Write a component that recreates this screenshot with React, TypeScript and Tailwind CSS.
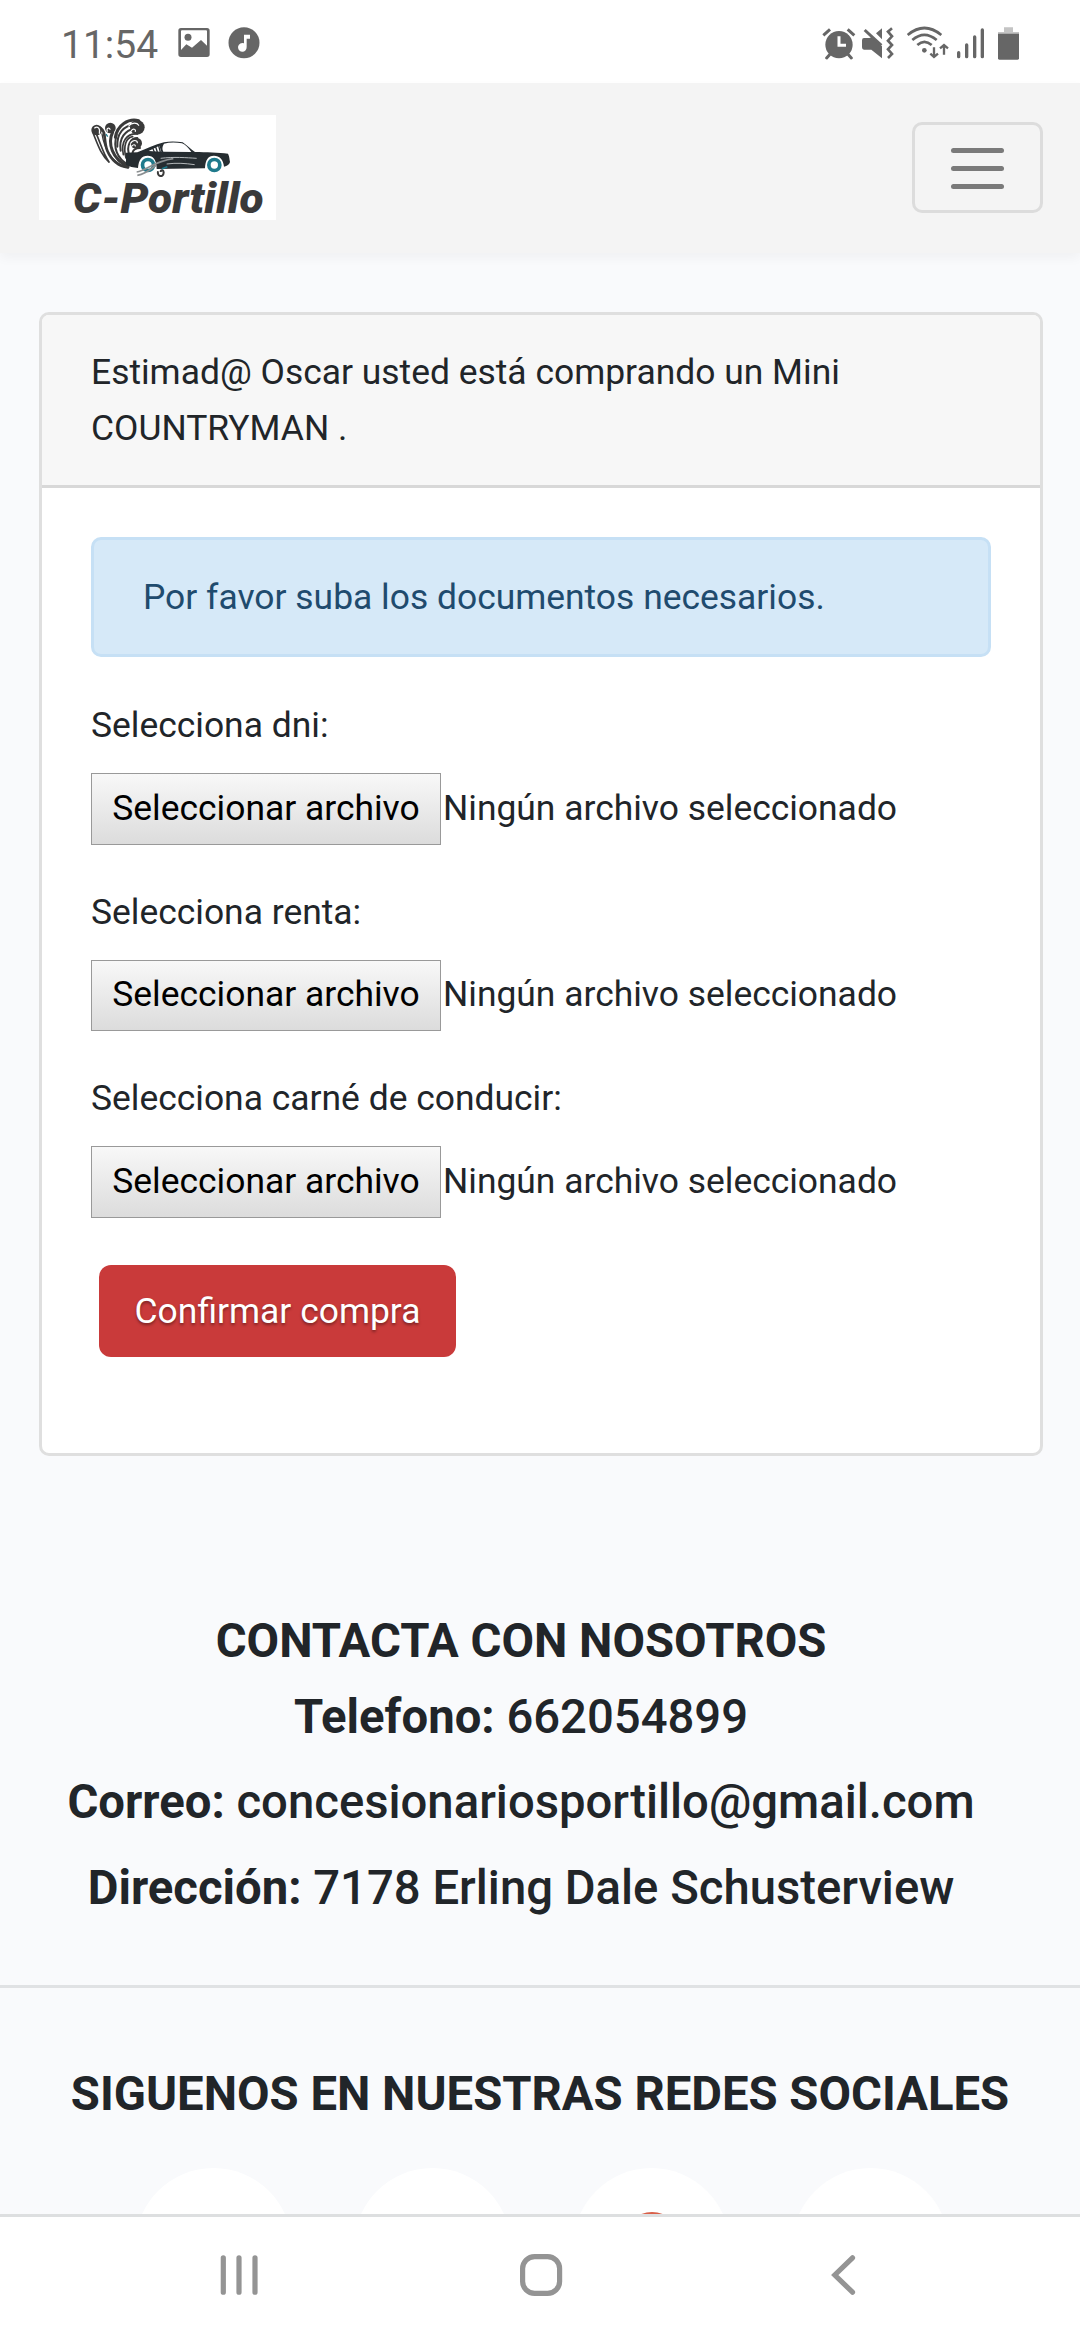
import React from "react";

const TEAL = "#1f7a8c";
const INK = "#262d31";
const SMOKE = "#3a3a3a";

function Logo() {
  return (
    <svg className="block h-[105px] w-[237px] overflow-visible bg-white" viewBox="117 345 711 315" fill="none">
      <g stroke={SMOKE} strokeLinecap="round">
        <path d="M278 396C292 430 302 464 327 486M290 404C304 436 308 458 327 486" strokeWidth="5" />
        <path d="M302 384C320 396 310 424 322 452C334 480 352 498 384 502" strokeWidth="8" />
        <path d="M306 402C312 440 326 478 372 500" strokeWidth="4" />
        <path d="M338 396C322 430 336 476 384 500" strokeWidth="9" />
        <path d="M350 404C338 444 352 476 384 494" strokeWidth="6" />
        <path d="M346 412C352 376 384 354 416 362" strokeWidth="9" />
        <path d="M352 440C350 400 372 376 402 374M362 452C356 414 376 390 404 386" strokeWidth="6" />
        <path d="M370 464C362 424 380 400 412 402M378 474C368 436 380 412 398 410" strokeWidth="5" />
        <path d="M388 466C378 436 392 414 412 414" strokeWidth="6" />
        <path d="M398 462C396 450 408 444 420 444" strokeWidth="6" />
      </g>
      <g fill={SMOKE}>
        <circle cx="290" cy="390" r="16" />
        <circle cx="331" cy="384" r="16" />
        <circle cx="412" cy="382" r="22" />
        <circle cx="409" cy="430" r="17" />
      </g>
      <g stroke="#fff" strokeWidth="3.500" strokeLinecap="round">
        <path d="M284 384C292 376 302 386 298 400M322 394C318 384 328 382 330 388" />
        <path d="M386 378C396 366 412 368 416 376M394 392C400 384 408 388 406 394" />
        <path d="M392 430C398 418 412 420 412 428M396 438C400 432 406 434 406 438" />
      </g>
      <path d="M318 402l5 8" stroke={TEAL} strokeWidth="4" />
      <path
        fill={INK}
        fillRule="evenodd"
        d="M378 458L412 457C440 446 464 434 492 427C510 423 530 424 548 427C562 436 572 448 585 456C618 457 656 457 684 461C689 470 688 478 690 486C688 494 682 498 672 500C670 478 658 467 642 467C624 467 616 480 615 505L470 507C470 480 460 467 443 467C424 467 416 480 414 504C400 502 388 500 378 494ZM492 431C486 440 486 448 490 455L574 456C565 444 556 434 546 430C528 427 508 427 492 431ZM446 453L484 455L478 437Z"
      />
      <path d="M457 442l6 14M466 438l6 18M475 434l6 22" stroke={INK} strokeWidth="4" />
      <path d="M482 475C520 470 560 473 590 475M500 492C530 488 556 490 584 494" stroke="#b4b8ba" strokeWidth="3" />
      <circle cx="444" cy="495" r="16.500" stroke={TEAL} strokeWidth="11" fill="#fff" />
      <circle cx="643" cy="495" r="16.500" stroke={TEAL} strokeWidth="11" fill="#fff" />
      <path d="M410 516C440 512 460 484 520 476M412 526C436 522 450 510 468 496" stroke="#8b8f91" strokeWidth="5" />
      <path d="M474 514C470 530 490 534 491 518C490 508 482 510 482 516" stroke={SMOKE} strokeWidth="6" />
      <path d="M486 506l16 -6" stroke={TEAL} strokeWidth="5" />
      <text
        x="219"
        y="638"
        fontFamily="Roboto, sans-serif"
        fontWeight="900"
        fontStyle="italic"
        fontSize="125"
        textLength="572"
        lengthAdjust="spacingAndGlyphs"
        fill={SMOKE}
      >
        C-Portillo
      </text>
    </svg>
  );
}

function StatusBar() {
  return (
    <div className="flex h-[83px] shrink-0 items-center justify-between bg-white pr-[60px] pl-[61px] text-[#666]">
      <div className="flex items-center">
        <span className="mt-[6px] w-[98px] text-[39px] leading-[46px]">11:54</span>
        <svg className="mt-[3px] ml-[19px] h-8 w-[82px]" viewBox="534 81 246 96" fill="#666">
          <path
            fillRule="evenodd"
            d="M543 84H621Q629 84 629 92V163Q629 171 621 171H543Q535 171 535 163V92Q535 84 543 84ZM546 91Q543 91 543 94V150L559 133L576 143L603 120L621 137V94Q621 91 618 91Z"
          />
          <circle cx="564" cy="112" r="10.500" />
          <circle cx="732" cy="128" r="46.500" />
          <path fill="#fff" d="M732 104H750V116H740V141A13 13 0 1 1 732 130Z" />
        </svg>
      </div>
      <svg className="mt-[2px] h-[34px] w-[198px]" viewBox="126 75 594 102" fill="none" stroke="#666">
        <g strokeWidth="9">
          <circle cx="177" cy="131" r="41" fill="#666" stroke="none" />
          <path d="M130 103L150 85M203 85L223 103" />
          <path d="M150 160L140 171M204 160L214 171" strokeLinecap="round" />
          <path d="M177 106V133H198" stroke="#fff" strokeWidth="9" />
        </g>
        <path fill="#666" stroke="none" d="M252 111H268L276 108L306 136V172L274 146H252Q246 146 246 139V118Q246 111 252 111ZM306 82V115L288 97Z" />
        <path d="M254 87L304 133" strokeWidth="9" />
        <path d="M336 82L324 92L336 106L324 119L336 132L324 145L336 159L324 171" strokeWidth="8" />
        <path d="M383 102Q433 60 484 102M397 117Q433 86 470 117M412 132Q433 113 455 132" strokeWidth="8" />
        <circle cx="433" cy="148" r="7" fill="#666" stroke="none" />
        <path d="M462 139V168M451 158L462 168L474 158M492 161V132M480 142L492 132L504 142" strokeWidth="7" />
        <path d="M536 155V167M560 132V167M584 108V167M607 87V167" strokeWidth="10" strokeLinecap="round" />
        <path fill="#c4c4c4" stroke="none" d="M672 79H699V93H717V101H654V93H672Z" />
        <path fill="#666" stroke="none" d="M654 98H717V172Q717 176 713 176H658Q654 176 654 172Z" />
      </svg>
    </div>
  );
}

function Navbar() {
  return (
    <nav className="relative flex h-[170px] shrink-0 items-start justify-between bg-[#f4f4f4] pr-[37px] pl-[39px] shadow-[0_5px_11px_rgba(0,0,0,0.04)]">
      <div className="mt-8">
        <Logo />
      </div>
      <button className="mt-[39px] flex h-[91px] w-[131px] items-center justify-center rounded-[10px] border-[3px] border-[#dcdcdc]">
        <span className="mt-px flex flex-col gap-[13px]">
          <span className="h-[5px] w-[53px] rounded-full bg-[#7a7a7a]" />
          <span className="h-[5px] w-[53px] rounded-full bg-[#7a7a7a]" />
          <span className="h-[5px] w-[53px] rounded-full bg-[#7a7a7a]" />
        </span>
      </button>
    </nav>
  );
}

function FileField({ label }: { label: string }) {
  return (
    <div className="h-[186.500px]">
      <label className="mb-5 block h-[56px]">{label}</label>
      <div className="flex h-[71.500px] items-center">
        <button className="h-full w-[350px] border border-[#999] bg-linear-to-b from-[#f8f8f8] to-[#dcdcdc] pb-[2px] text-black">
          Seleccionar archivo
        </button>
        <span className="ml-[2px] pb-[2px]">Ningún archivo seleccionado</span>
      </div>
    </div>
  );
}

function PurchaseCard() {
  return (
    <section className="mr-[37px] mt-[59px] ml-[39px] h-[1144px] shrink-0 overflow-hidden rounded-[10px] border-[3px] border-[#dfdfdf] bg-white">
      <header className="h-[173px] border-b-[3px] border-[#d8d8d8] bg-[#f7f7f7] px-[49px] pt-[29px]">
        Estimad@ Oscar usted está comprando un Mini COUNTRYMAN .
      </header>
      <div className="px-[49px] pt-[49px]">
        <div className="mb-10 h-[120px] rounded-[10px] border-[3px] border-[#c6e0f5] bg-[#d6e9f8] px-[49px] pt-[29px] text-[#1f4b6e]">
          Por favor suba los documentos necesarios.
        </div>
        <FileField label="Selecciona dni:" />
        <FileField label="Selecciona renta:" />
        <FileField label="Selecciona carné de conducir:" />
        <button className="mt-[8.500px] ml-2 flex h-[92px] w-[357px] items-center justify-center rounded-[12px] bg-[#c93a3a] text-white [text-shadow:0_2px_3px_rgba(0,0,0,0.4)]">
          Confirmar compra
        </button>
      </div>
    </section>
  );
}

function Contact() {
  return (
    <section className="mt-[151px] w-[1042px] shrink-0 text-center text-[47.250px] leading-[68px] font-medium">
      <h4 className="h-[76px] font-bold">CONTACTA CON NOSOTROS</h4>
      <p className="h-[85px]">
        <b className="font-bold">Telefono:</b> 662054899
      </p>
      <p className="h-[86px]">
        <b className="font-bold">Correo:</b> concesionariosportillo@gmail.com
      </p>
      <p className="h-[83px]">
        <b className="font-bold">Dirección:</b> 7178 Erling Dale Schusterview
      </p>
    </section>
  );
}

function Social() {
  return (
    <section className="shrink-0">
      <h4 className="mt-[72px] h-[108px] text-center text-[47.250px] leading-[68px] font-bold whitespace-nowrap">
        SIGUENOS EN NUESTRAS REDES SOCIALES
      </h4>
      <div className="ml-[135px] flex h-[46px] gap-[62px] overflow-hidden">
        <span className="size-[157px] shrink-0 rounded-full bg-white" />
        <span className="size-[157px] shrink-0 rounded-full bg-white" />
        <span className="size-[157px] shrink-0 rounded-full bg-white pt-[43.500px]">
          <span className="mx-auto block size-[58px] rounded-full bg-[#d9604a]" />
        </span>
        <span className="size-[157px] shrink-0 rounded-full bg-white" />
      </div>
    </section>
  );
}

function SystemNav() {
  return (
    <div className="flex h-[126px] shrink-0 items-start border-t-[3px] border-[#dddfe0] bg-white pt-[35px] pl-[218px]">
      <svg className="h-[46px] w-[642px]" viewBox="218 2252 642 46" fill="none" stroke="#949494" strokeWidth="5.200" strokeLinecap="round">
        <path d="M223.300 2257.800V2292.200M239 2257.800V2292.200M255 2257.800V2292.200" />
        <rect x="522.600" y="2256.600" width="37" height="36.800" rx="12" />
        <path d="M852.500 2257.800L834.800 2275L852.500 2292.200" />
      </svg>
    </div>
  );
}

export default function App() {
  return (
    <div className="flex h-[2340px] w-[1080px] flex-col overflow-hidden bg-[#f9fafc] font-[Roboto,sans-serif] text-[35.440px] leading-[56px] text-[#212529]">
      <StatusBar />
      <Navbar />
      <PurchaseCard />
      <Contact />
      <hr className="mt-[48px] h-[3px] shrink-0 border-0 bg-[#e0e2e4]" />
      <Social />
      <SystemNav />
    </div>
  );
}
